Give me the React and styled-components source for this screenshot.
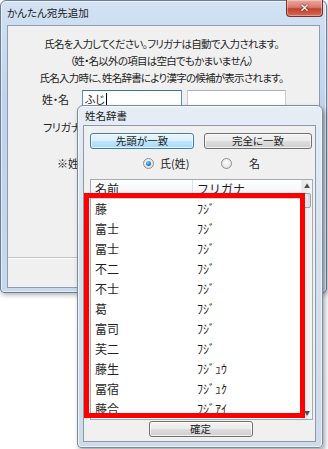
import React from 'react';
import styled, { createGlobalStyle } from 'styled-components';

const Global = createGlobalStyle`
  html, body { margin: 0; padding: 0; background: #fff; }
  body { width: 328px; height: 449px; overflow: hidden; font-family: "Noto Sans CJK JP", "Noto Sans", sans-serif; color: #1e1e1e; }
`;

const Desktop = styled.div`
  position: relative;
  width: 328px;
  height: 449px;
  background: #fff;
  overflow: hidden;
`;

const Win = styled.div`
  position: absolute;
  left: ${p => p.$x}px;
  top: ${p => p.$y}px;
  width: ${p => p.$w}px;
  height: ${p => p.$h}px;
  box-sizing: border-box;
  display: flex;
  flex-direction: column;
  padding: 0 ${p => p.$fr}px ${p => p.$fb}px ${p => p.$fl}px;
  border: 1px solid ${p => (p.$popup ? '#7d8ba0' : '#6c7d95')};
  border-radius: 6px 6px 4px 4px;
  background: ${p => p.$popup
    ? 'linear-gradient(180deg, #e6edf5 0%, #d6e1ee 40%, #cfdbe9 100%)'
    : 'linear-gradient(180deg, #d3e2f4 0%, #bed3ec 35%, #c6d9ef 100%)'};
  box-shadow: ${p => p.$popup
    ? '2px 3px 5px rgba(0,0,0,0.35), inset 0 0 0 1px rgba(255,255,255,0.6)'
    : '1px 2px 5px rgba(0,0,0,0.3), inset 0 0 0 1px rgba(255,255,255,0.55)'};
`;

const TitleBar = styled.div`
  display: flex;
  align-items: ${p => (p.$popup ? 'center' : 'flex-start')};
  height: ${p => p.$h}px;
  flex: none;
  padding-left: ${p => p.$pl}px;
`;

const TitleText = styled.span`
  font-size: ${p => p.$size}px;
  line-height: 1;
  color: #1b1b1b;
  font-feature-settings: "palt";
  margin-top: ${p => p.$mt || 0}px;
`;

const CloseBtn = styled.div`
  margin-left: auto;
  margin-right: -3px;
  margin-top: -1px;
  width: 37px;
  height: 17px;
  box-sizing: border-box;
  border: 1px solid #7b2f2a;
  border-top: none;
  border-radius: 0 0 4px 4px;
  background: linear-gradient(180deg, #e8a89e 0%, #d87c70 45%, #c3412f 55%, #d46a55 100%);
  display: flex;
  align-items: center;
  justify-content: center;
  color: #fff;
  font-family: "DejaVu Sans", sans-serif;
  font-weight: bold;
  font-size: 12px;
  text-shadow: 0 0 2px #5a1a14, 0 0 1px #5a1a14;
  box-shadow: inset 0 0 0 1px rgba(255,255,255,0.35);
`;

const Client = styled.div`
  flex: 1;
  display: flex;
  flex-direction: column;
  background: #f0f0f0;
  border: 1px solid #8e9bb0;
  min-height: 0;
`;

const Intro = styled.div`
  padding-top: 9px;
  padding-right: 4px;
  text-align: center;
  font-size: 10.5px;
  line-height: 17px;
  font-feature-settings: "palt";
  letter-spacing: -0.75px;
  color: #1e1e1e;
  white-space: nowrap;
`;

const FieldRow = styled.div`
  display: flex;
  align-items: center;
  height: 17px;
  margin-top: ${p => p.$mt}px;
`;

const Label = styled.div`
  box-sizing: border-box;
  width: 74px;
  flex: none;
  padding-left: ${p => p.$pl}px;
  font-size: 11px;
  white-space: nowrap;
  font-feature-settings: "palt";
  letter-spacing: -0.3px;
  color: #1e1e1e;
`;

const Input = styled.div`
  box-sizing: border-box;
  width: ${p => p.$w}px;
  height: 17px;
  flex: none;
  margin-right: 5px;
  background: #fff;
  border: 1px solid ${p => (p.$focus ? '#5b8fc0' : '#c8ccd3')};
  border-top-color: ${p => (p.$focus ? '#3d74a8' : '#acb0b8')};
  display: flex;
  align-items: center;
  padding-left: 2px;
  font-size: 11px;
  font-feature-settings: "palt";
`;

const Caret = styled.span`
  display: inline-block;
  width: 1px;
  height: 12px;
  background: #000;
  margin-left: 1px;
`;

const Note = styled.div`
  margin-top: 20px;
  padding-left: 49px;
  font-size: 11px;
  line-height: 17px;
  font-feature-settings: "palt";
  white-space: nowrap;
`;

const Footer = styled.div`
  margin-top: auto;
  height: 29px;
  border-top: 1px solid #bfc3c8;
  box-shadow: inset 0 1px 0 #fbfbfb;
`;

const Btn = styled.div`
  box-sizing: border-box;
  width: ${p => p.$w}px;
  height: 16px;
  flex: none;
  border-radius: 3px;
  border: 1px solid ${p => (p.$hot ? '#3c7fb1' : '#707070')};
  background: ${p => (p.$hot
    ? 'linear-gradient(180deg, #eaf6fd 0%, #d9f0fc 48%, #bee6fd 52%, #a7d9f5 100%)'
    : 'linear-gradient(180deg, #f3f3f3 0%, #ebebeb 48%, #dddddd 52%, #cfcfcf 100%)')};
  box-shadow: inset 0 0 0 1px rgba(255,255,255,0.7);
  display: flex;
  align-items: center;
  justify-content: center;
  font-size: 10.5px;
  line-height: 1;
  color: #1b1b1b;
  font-feature-settings: "palt";
`;

const PopClient = styled.div`
  flex: 1;
  display: flex;
  flex-direction: column;
  background: #f0f0f0;
  border: 1px solid #8d99ab;
  padding: 7px 4px 0 6px;
`;

const BtnRow = styled.div`
  display: flex;
  gap: 10px;
`;

const RadioRow = styled.div`
  display: flex;
  align-items: center;
  height: 16px;
  margin-top: 6px;
  padding-left: 53px;
`;

const RadioItem = styled.div`
  display: flex;
  align-items: center;
  gap: ${p => p.$gap}px;
  width: ${p => p.$w}px;
  flex: none;
  font-size: 11px;
  font-feature-settings: "palt";
  white-space: nowrap;
`;

const RadioDot = styled.span`
  box-sizing: border-box;
  width: 11px;
  height: 11px;
  flex: none;
  border-radius: 50%;
  border: 1px solid #8c8f94;
  background: radial-gradient(circle at 50% 40%, #ffffff 0%, #e9e9e9 60%, #d0d0d0 100%);
  display: flex;
  align-items: center;
  justify-content: center;
  &::after {
    content: "";
    width: 5px;
    height: 5px;
    border-radius: 50%;
    display: ${p => (p.$on ? 'block' : 'none')};
    background: radial-gradient(circle at 40% 35%, #9fd8ff 0%, #2a8ad4 45%, #0b4f94 100%);
  }
`;

const ListBox = styled.div`
  margin-top: 8px;
  width: 223px;
  height: 241px;
  box-sizing: border-box;
  border: 1px solid #a6abb3;
  background: #fff;
  display: flex;
  overflow: hidden;
`;

const Table = styled.div`
  width: 210px;
  display: flex;
  flex-direction: column;
`;

const HeaderRow = styled.div`
  display: flex;
  height: 18px;
  flex: none;
  background: linear-gradient(180deg, #ffffff 0%, #f7f8f9 50%, #eef0f2 100%);
  border-bottom: 1px solid #d5d5d5;
`;

const Cell = styled.div`
  box-sizing: border-box;
  width: ${p => p.$w}px;
  padding-left: 4px;
  display: flex;
  align-items: center;
  font-size: 12px;
  line-height: 1;
  color: #1e1e1e;
  white-space: nowrap;
  border-right: ${p => (p.$div ? '1px solid #dde0e4' : 'none')};
`;

const Row = styled.div`
  display: flex;
  height: 20px;
  flex: none;
`;

const ScrollBar = styled.div`
  width: 11px;
  display: flex;
  flex-direction: column;
  background: linear-gradient(90deg, #e8e8e8, #f5f5f5);
  border-left: 1px solid #eeeeee;
`;

const SBBtn = styled.div`
  height: 12px;
  flex: none;
  display: flex;
  align-items: center;
  justify-content: center;
  font-size: 6px;
  color: #4d4d4d;
  line-height: 1;
`;

const Thumb = styled.div`
  height: 13px;
  margin: 1px 1px 0 1px;
  border: 1px solid #9ea4ab;
  border-radius: 2px;
  background: linear-gradient(90deg, #eef0f2, #d8dce1);
`;

const Spacer = styled.div`
  flex: 1;
`;

const FootRow = styled.div`
  display: flex;
  justify-content: center;
  margin-top: 1px;
`;

const Highlight = styled.div`
  position: absolute;
  left: 6px;
  top: 87px;
  width: 221px;
  height: 225px;
  box-sizing: border-box;
  border: 5px solid #ff0000;
  pointer-events: none;
`;

const rows = [
  ['藤', 'ﾌｼﾞ'],
  ['富士', 'ﾌｼﾞ'],
  ['冨士', 'ﾌｼﾞ'],
  ['不二', 'ﾌｼﾞ'],
  ['不士', 'ﾌｼﾞ'],
  ['葛', 'ﾌｼﾞ'],
  ['富司', 'ﾌｼﾞ'],
  ['芙二', 'ﾌｼﾞ'],
  ['藤生', 'ﾌｼﾞｭｳ'],
  ['冨宿', 'ﾌｼﾞｭｸ'],
  ['藤合', 'ﾌｼﾞｱｲ'],
];

export default function App() {
  return (
    <Desktop>
      <Global />
      <Win $x={0} $y={0} $w={327} $h={293} $fl={6} $fr={6} $fb={4}>
        <TitleBar $h={24} $pl={0}>
          <TitleText $size={10.5} $mt={7}>かんたん宛先追加</TitleText>
          <CloseBtn>✕</CloseBtn>
        </TitleBar>
        <Client>
          <Intro>
            氏名を入力してください。フリガナは自動で入力されます。<br />
            （姓・名以外の項目は空白でもかまいません）<br />
            氏名入力時に、姓名辞書により漢字の候補が表示されます。
          </Intro>
          <FieldRow $mt={4}>
            <Label $pl={34}>姓・名</Label>
            <Input $w={100} $focus>ふじ<Caret /></Input>
            <Input $w={99} />
          </FieldRow>
          <FieldRow $mt={11}>
            <Label $pl={35}>フリガナ</Label>
            <Input $w={100} />
            <Input $w={99} />
          </FieldRow>
          <Note>※姓・名</Note>
          <Footer />
        </Client>
      </Win>

      <Win $popup $x={77} $y={105} $w={246} $h={343} $fl={5} $fr={6} $fb={5}>
        <TitleBar $popup $h={19} $pl={2}>
          <TitleText $size={10.5} $mt={1}>姓名辞書</TitleText>
        </TitleBar>
        <PopClient>
          <BtnRow>
            <Btn $w={104} $hot>先頭が一致</Btn>
            <Btn $w={108}>完全に一致</Btn>
          </BtnRow>
          <RadioRow>
            <RadioItem $w={78} $gap={6}><RadioDot $on />氏(姓)</RadioItem>
            <RadioItem $w={60} $gap={17}><RadioDot />名</RadioItem>
          </RadioRow>
          <ListBox>
            <Table>
              <HeaderRow>
                <Cell $w={102} $div>名前</Cell>
                <Cell $w={108}>フリガナ</Cell>
              </HeaderRow>
              {rows.map(([n, f], i) => (
                <Row key={i}>
                  <Cell $w={102}>{n}</Cell>
                  <Cell $w={108}>{f}</Cell>
                </Row>
              ))}
            </Table>
            <ScrollBar>
              <SBBtn>▲</SBBtn>
              <Thumb />
              <Spacer />
              <SBBtn>▼</SBBtn>
            </ScrollBar>
          </ListBox>
          <FootRow>
            <Btn $w={104}>確定</Btn>
          </FootRow>
        </PopClient>
        <Highlight />
      </Win>
    </Desktop>
  );
}
